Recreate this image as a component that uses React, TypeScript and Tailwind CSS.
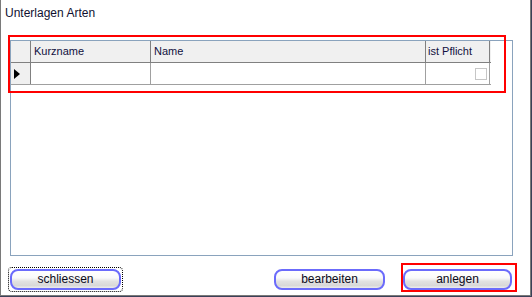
import React from "react";

const font = { fontFamily: '"Liberation Sans", Arial, sans-serif' };

function Btn({ label, w }: { label: string; w: string }) {
  return (
    <div
      className={`${w} h-[21px] rounded-[8px] border-2 border-[#6b6bfb] flex items-center justify-center text-[12px] text-[#0a0a1a] bg-[linear-gradient(to_bottom,#ffffff_0%,#fafafa_40%,#e2e2e2_60%,#d8d8d8_85%,#ececec_100%)]`}
    >
      {label}
    </div>
  );
}

export default function App() {
  return (
    <div className="w-[532px] h-[297px] bg-[#3b4058] overflow-hidden" style={font}>
      <div className="relative w-[531px] h-[296px] bg-white border-l border-r border-b border-[#7a7a7a] flex flex-col">
        <div className="pl-[4px] pt-[6px] h-[40px] text-[12px] text-[#101030] leading-[14px]">Unterlagen Arten</div>
        <div className="ml-[9px] w-[503px] h-[216px] border border-[#8aa3bd] bg-white">
          <div className="flex w-[480px] h-[22px] bg-[#f0f0f0] border-b border-[#808080] text-[11px] text-[#101040]">
            <div className="w-[20px] border-r border-[#808080]" />
            <div className="w-[120px] border-r border-[#808080] pl-[3px] flex items-center">Kurzname</div>
            <div className="w-[275px] border-r border-[#808080] pl-[3px] flex items-center">Name</div>
            <div className="w-[64px] border-r border-[#808080] pl-[2px] flex items-center">ist Pflicht</div>
          </div>
          <div className="flex h-[22px] w-[480px] border-b border-[#a0a0a0] bg-white">
            <div className="w-[20px] bg-[#f0f0f0] border-r border-[#808080] flex items-center pl-[3px]">
              <svg width="6" height="10" viewBox="0 0 6 10"><path d="M0 0 L6 5 L0 10 Z" fill="#000" /></svg>
            </div>
            <div className="w-[120px] border-r border-[#a0a0a0]" />
            <div className="w-[275px] border-r border-[#a0a0a0]" />
            <div className="w-[64px] border-r border-[#a0a0a0] flex items-center justify-end pr-[2px]">
              <div className="w-[12px] h-[12px] border border-[#c6c6c6] bg-white" />
            </div>
          </div>
        </div>
        <div className="flex items-center h-[24px] mt-[11px] pl-[9px] pr-[18px]">
          <div className="p-[1px] outline outline-1 outline-dotted outline-black rounded-[3px] -ml-[1px]">
            <Btn label="schliessen" w="w-[111px]" />
          </div>
          <div className="flex-1" />
          <Btn label="bearbeiten" w="w-[111px]" />
          <div className="w-[18px]" />
          <Btn label="anlegen" w="w-[109px]" />
        </div>
        <div className="absolute left-[7px] top-[35px] w-[498px] h-[58px] border-2 border-[#ff0000]" />
        <div className="absolute left-[400px] top-[263px] w-[116px] h-[29px] border-2 border-[#ff0000]" />
      </div>
    </div>
  );
}
